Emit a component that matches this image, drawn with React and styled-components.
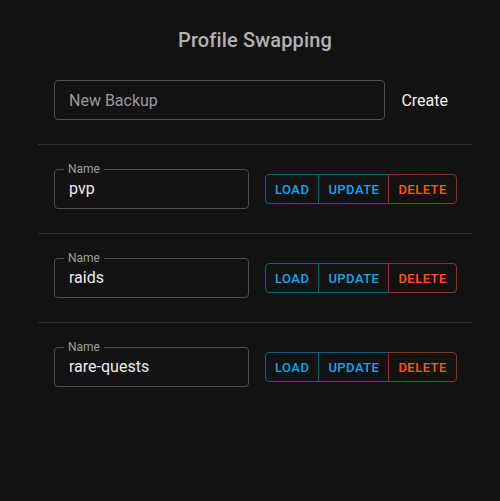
import styled, { createGlobalStyle } from 'styled-components';

const profiles = ['pvp', 'raids', 'rare-quests'];

const GlobalStyle = createGlobalStyle`
  html, body {
    margin: 0;
    background-color: #121212;
    font-family: Roboto, 'Liberation Sans', sans-serif;
  }
`;

const App = () => {
  return (
    <>
      <GlobalStyle />
      <Page>
        <Panel>
          <Title>Profile Swapping</Title>
          <CreateRow>
            <BackupInput placeholder="New Backup" />
            <TextButton>Create</TextButton>
          </CreateRow>
          {profiles.map((name) => (
            <ProfileRow key={name}>
              <Field>
                <FieldLabel>Name</FieldLabel>
                <FieldInput defaultValue={name} />
              </Field>
              <ButtonGroup>
                <GroupButton tone="info">Load</GroupButton>
                <GroupButton tone="info">Update</GroupButton>
                <GroupButton tone="danger">Delete</GroupButton>
              </ButtonGroup>
            </ProfileRow>
          ))}
        </Panel>
      </Page>
    </>
  );
};

export default App;

const Page = styled.div`
  width: 500px;
  height: 501px;
  box-sizing: border-box;
  padding: 24px 28px 0 38px;
`;

const Panel = styled.div`
  display: flex;
  flex-direction: column;
`;

const Title = styled.h6`
  margin: 0;
  font-size: 20px;
  font-weight: 500;
  line-height: 32px;
  letter-spacing: 0.15px;
  text-align: center;
  color: #b3b3b3;
`;

const CreateRow = styled.div`
  display: flex;
  align-items: center;
  gap: 8px;
  padding: 24px 16px;
  border-bottom: 1px solid #2e2e2e;
`;

const BackupInput = styled.input`
  flex: 1;
  height: 40px;
  box-sizing: border-box;
  padding: 0 14px;
  border: 1px solid #4d4d4d;
  border-radius: 4px;
  background: transparent;
  color: #ececec;
  font-family: Roboto, sans-serif;
  font-size: 16px;
  outline: none;

  &::placeholder {
    color: #9a9a9a;
    opacity: 1;
  }
`;

const TextButton = styled.button`
  height: 36px;
  padding: 6px 8px;
  border: none;
  border-radius: 4px;
  background: transparent;
  color: #f2f2f2;
  font-family: Roboto, sans-serif;
  font-size: 16px;
  font-weight: 400;
  cursor: pointer;
`;

const ProfileRow = styled.div`
  display: flex;
  align-items: center;
  gap: 16px;
  padding: 18px 16px 24px;
  border-bottom: 1px solid #2e2e2e;

  &:last-child {
    border-bottom: none;
  }
`;

const Field = styled.fieldset`
  width: 195px;
  flex-shrink: 0;
  box-sizing: border-box;
  margin: 0;
  padding: 0 14px 8px;
  border: 1px solid #4d4d4d;
  border-radius: 4px;
  min-width: 0;
`;

const FieldLabel = styled.legend`
  margin-left: -5px;
  padding: 0 4px;
  font-size: 12px;
  line-height: 12px;
  color: #9e9e9e;
`;

const FieldInput = styled.input`
  display: block;
  width: 100%;
  box-sizing: border-box;
  padding: 2px 0 0;
  border: none;
  background: transparent;
  color: #ececec;
  font-family: Roboto, sans-serif;
  font-size: 16px;
  line-height: 23px;
  height: 25px;
  outline: none;
`;

const ButtonGroup = styled.div`
  display: flex;
  margin-top: 6px;

  & > button:first-child {
    border-radius: 4px 0 0 4px;
  }
  & > button:last-child {
    border-radius: 0 4px 4px 0;
  }
  & > button + button {
    margin-left: -1px;
  }
`;

const GroupButton = styled.button`
  height: 30px;
  box-sizing: border-box;
  padding: 0 9px;
  border: 1px solid ${(props) => (props.tone === 'danger' ? '#8a3318' : '#0a6088')};
  border-radius: 0;
  background: transparent;
  color: ${(props) => (props.tone === 'danger' ? '#ff5722' : '#0fa6ec')};
  font-family: Roboto, sans-serif;
  font-size: 13px;
  font-weight: 500;
  letter-spacing: 0.46px;
  text-transform: uppercase;
  cursor: pointer;
`;
